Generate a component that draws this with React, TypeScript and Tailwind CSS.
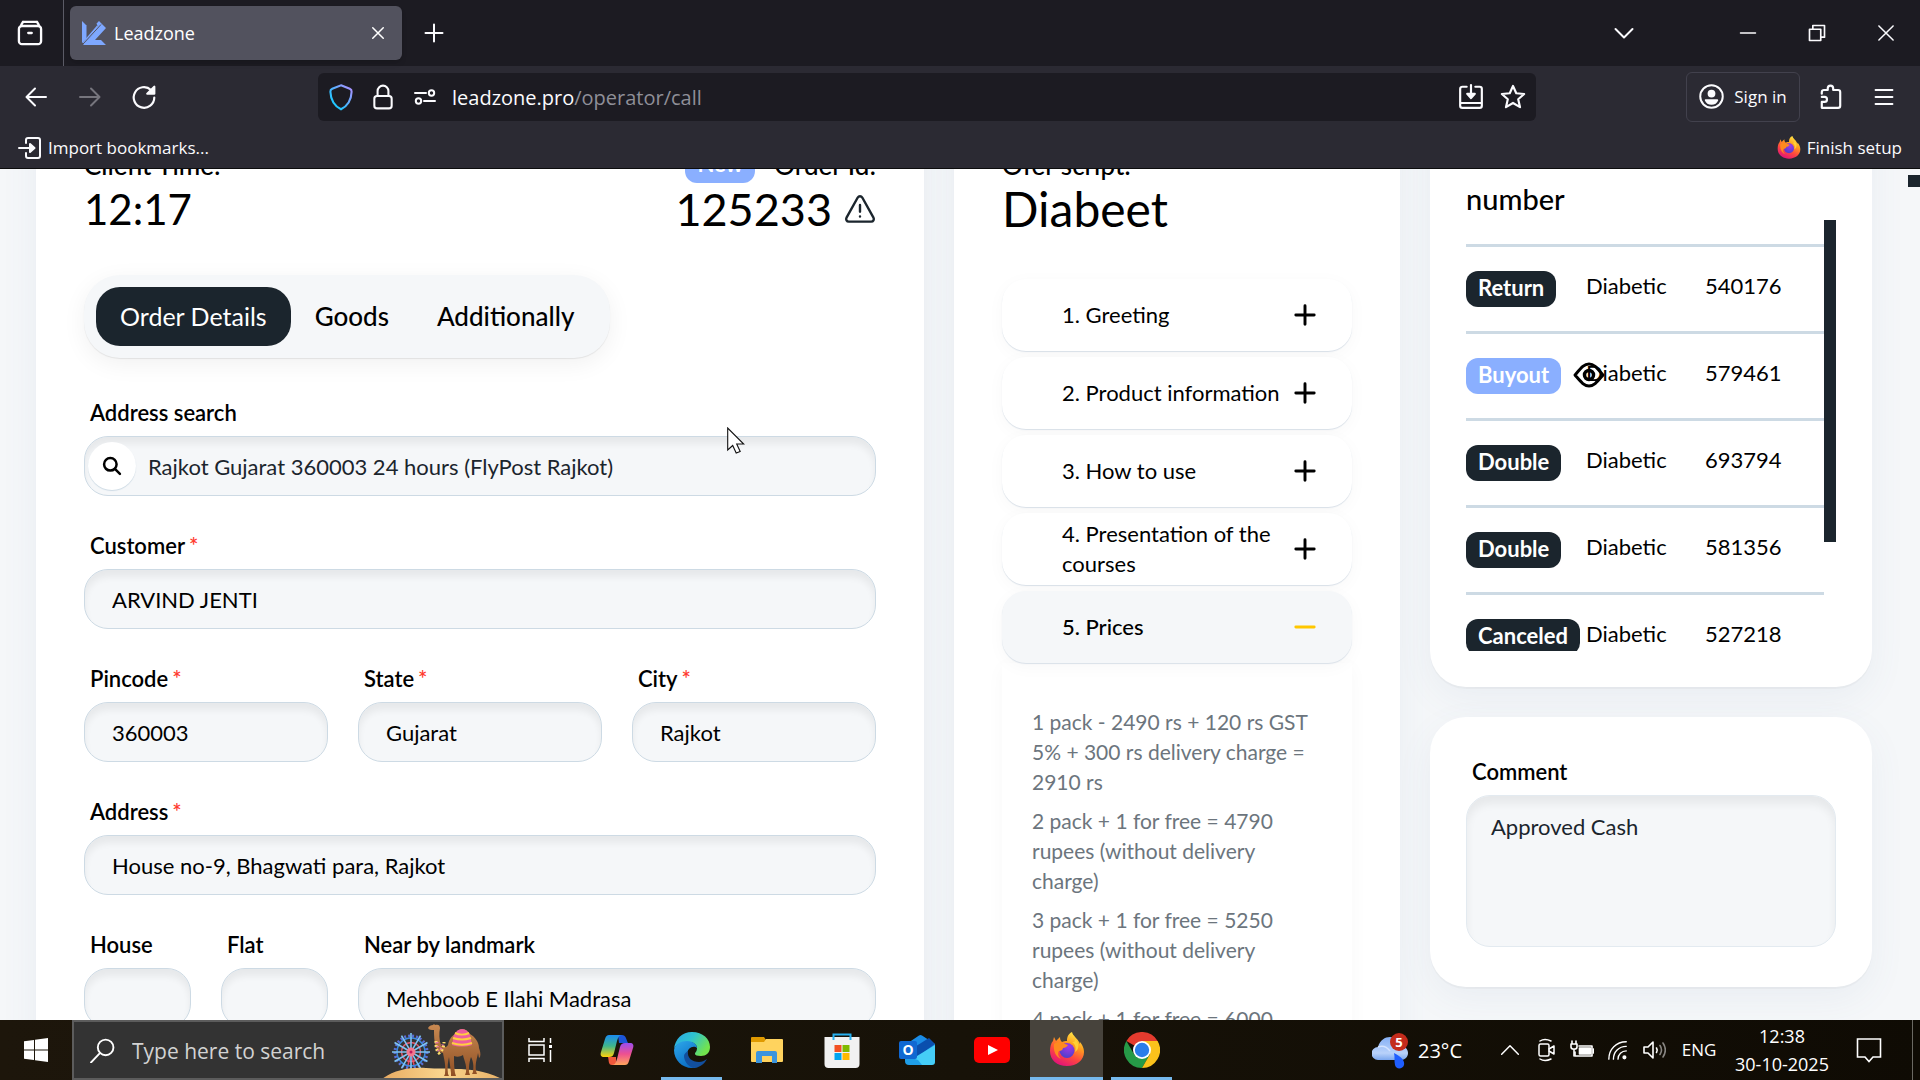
import type { ReactNode } from "react";

const headings = "text-[26px] leading-8 font-medium";
const bigText = "text-[45px] leading-[56px]";
const labelClass = "mb-2 ml-1.5 flex text-[22px] leading-[30px] font-semibold whitespace-nowrap";
const inputClass =
  "h-[60px] w-full rounded-3xl border border-[#cddae4] bg-[#f5f7f9] px-[27px] text-[22px] text-black shadow-[inset_0_7px_7px_rgba(0,0,0,0.06)] outline-none";
const cardShadow = "shadow-[0_2px_1px_rgba(0,0,0,0.03),0_12px_36px_rgba(90,120,150,0.07)]";

type FieldProps = { id: string; label: string; value: string; required?: boolean; className?: string };

function Field({ id, label, value, required, className }: FieldProps) {
  return (
    <div className={className}>
      <label htmlFor={id} className={labelClass}>
        {label}
        {required && <span className="ml-1 text-[#ff3b30]">*</span>}
      </label>
      <input id={id} type="text" defaultValue={value} className={inputClass} />
    </div>
  );
}

/* ---------- browser chrome ---------- */

type IconProps = { children: ReactNode; size?: number; stroke?: number; className?: string };

function Icon({ children, size = 24, stroke = 2, className }: IconProps) {
  return (
    <svg
      width={size}
      height={size}
      viewBox="0 0 24 24"
      fill="none"
      stroke="currentColor"
      strokeWidth={stroke}
      strokeLinecap="round"
      strokeLinejoin="round"
      className={className}
      aria-hidden="true"
    >
      {children}
    </svg>
  );
}

function FirefoxLogo({ size }: { size: number }) {
  return (
    <svg width={size} height={size} viewBox="0 0 36 36" aria-hidden="true">
      <defs>
        <linearGradient id="ffBody" x1="0.8" y1="0" x2="0.3" y2="1">
          <stop offset="0" stopColor="#fff44f" />
          <stop offset="0.35" stopColor="#ffa01e" />
          <stop offset="0.65" stopColor="#ff4a3d" />
          <stop offset="1" stopColor="#e1107c" />
        </linearGradient>
        <radialGradient id="ffGlobe" cx="0.6" cy="0.25" r="0.8">
          <stop offset="0" stopColor="#a238e8" />
          <stop offset="1" stopColor="#4a3fc8" />
        </radialGradient>
      </defs>
      <path
        d="M23 0c1 4 5 6 7 10l1 2c0-1 0-2-1-3 4 4 5 8 5 11 0 8-7 14-17 14S1 28 1 19c0-4 1-8 3-10l1-4 2 4 4-4c0 3 1 4 2 5 2-1 3-1 5-1 0-4 1-7 5-9z"
        fill="url(#ffBody)"
      />
      <circle cx="18" cy="18.500" r="7.500" fill="url(#ffGlobe)" />
      <path d="M5 12c4-3 8-2 11 0l3 1c-1 2-3 3-5 3 0 2-2 3-4 3-2 3 0 6 2 8-5-2-8-8-7-15z" fill="#ff8a1f" />
      <path d="M20 9c5 1 8 5 6 11 5-3 4-9 0-13 1 3-1 4-6 2z" fill="#ffd437" opacity="0.900" />
    </svg>
  );
}

function LeadzoneLogo() {
  return (
    <svg width="24" height="24" viewBox="0 0 24 24" fill="#7ea8ff" aria-hidden="true">
      <path d="M0 0l4.500 4.500v13L0 22z" />
      <path d="M14.500 2.500L17 0l7 7-11 12h6l5 5H1L16.500 7.500z" />
      <path d="M.5 21.500L15 4.500l2.500 2.500L2 23.500z" />
      <path d="M1 23L19 3.500" stroke="#52525e" strokeWidth="1" />
    </svg>
  );
}

function TabStrip() {
  return (
    <div className="flex h-[66px] items-center bg-[#1c1b22]">
      <button aria-label="Recent browsing" className="flex h-full w-16 items-center justify-center border-r border-[#5b5b66] pr-1">
        <Icon size={28} stroke={2}>
          <path d="M6 2.500h12M4.500 5L6 2.500M19.500 5L18 2.500" />
          <path d="M2.500 8.500a2.500 2.500 0 0 1 2.500-2.500h14a2.500 2.500 0 0 1 2.500 2.500V19a2.500 2.500 0 0 1-2.500 2.500H5A2.500 2.500 0 0 1 2.500 19zM10.500 12h3" />
        </Icon>
      </button>
      <div className="ml-1.5 flex h-[54px] w-[332px] items-center rounded-md bg-[#52525e] px-3 text-white shadow-md">
        <LeadzoneLogo />
        <span className="ml-2 flex-1 text-[18px]">Leadzone</span>
        <button aria-label="Close tab" className="flex h-8 w-6 items-center justify-center">
          <Icon size={18} stroke={2}>
            <path d="M5 5l14 14M19 5L5 19" />
          </Icon>
        </button>
      </div>
      <button aria-label="New tab" className="ml-4 flex h-8 w-8 items-center justify-center">
        <Icon size={24} stroke={2}>
          <path d="M12 3.500v17M3.500 12h17" />
        </Icon>
      </button>
      <div className="ml-auto flex items-center">
        <button aria-label="List all tabs" className="mr-[55px] flex w-[69px] justify-center">
          <Icon size={24} stroke={2}>
            <path d="M3.500 8l8.500 8.500L20.500 8" />
          </Icon>
        </button>
        <button aria-label="Minimize" className="flex w-[69px] justify-center">
          <Icon size={20} stroke={1.800}>
            <path d="M3 12h18" />
          </Icon>
        </button>
        <button aria-label="Restore" className="flex w-[69px] justify-center">
          <Icon size={20} stroke={2}>
            <path d="M3 7.500h13.500V21H3zM7 7V3h14v14h-4" />
          </Icon>
        </button>
        <button aria-label="Close window" className="flex w-[69px] justify-center">
          <Icon size={20} stroke={1.800}>
            <path d="M3.500 3.500l17 17M20.500 3.500l-17 17" />
          </Icon>
        </button>
      </div>
    </div>
  );
}

function NavBar() {
  return (
    <div className="flex h-[61px] items-center">
      <div className="flex w-[318px] items-center pl-[9px]">
        <button aria-label="Back" className="flex w-[54px] justify-center">
          <Icon size={24}>
            <path d="M22 12H3M11 3.500L2.500 12l8.500 8.500" />
          </Icon>
        </button>
        <button aria-label="Forward" className="flex w-[54px] justify-center text-[#76757d]">
          <Icon size={24}>
            <path d="M2 12h19M13 3.500l8.500 8.500-8.500 8.500" />
          </Icon>
        </button>
        <button aria-label="Reload" className="flex w-[54px] justify-center">
          <Icon size={26}>
            <path d="M21.500 12.500A9.500 9.500 0 1 1 18.500 5.500" />
            <path d="M21.500 2.500v6.500H15z" fill="currentColor" />
          </Icon>
        </button>
      </div>
      <div className="flex h-12 flex-1 items-center rounded-md bg-[#1c1b22] pr-2.5 pl-[9px]">
        <svg width="28" height="28" viewBox="0 0 24 24" fill="none" aria-hidden="true">
          <defs>
            <linearGradient id="shield" x1="1" y1="0" x2="0" y2="1">
              <stop offset="0" stopColor="#b78cff" />
              <stop offset="0.6" stopColor="#3fb9ff" />
              <stop offset="1" stopColor="#00d5ff" />
            </linearGradient>
          </defs>
          <path
            d="M12 2l7.500 3c1.200.5 1.700 1 1.600 2.500C20.800 14.500 18 19.500 12 22.500 6 19.500 3.200 14.500 2.900 7.500 2.800 6 3.300 5.500 4.500 5z"
            stroke="url(#shield)"
            strokeWidth="1.800"
          />
        </svg>
        <Icon size={26} stroke={1.900} className="ml-[15px]">
          <rect x="4" y="11" width="16" height="11.500" rx="2.500" />
          <path d="M7 11V6.500a5 5 0 0 1 10 0V11" />
        </Icon>
        <Icon size={24} stroke={2} className="ml-[17px]">
          <path d="M2 8h11M11 16h11" />
          <circle cx="18.500" cy="8" r="2.700" />
          <circle cx="5.500" cy="16" r="2.700" />
        </Icon>
        <div role="textbox" aria-label="Address" className="ml-[15px] flex-1 pt-0.5 text-[20px] text-[#fbfbfe]">
          leadzone.pro<span className="text-[#8f8f98]">/operator/call</span>
        </div>
        <button aria-label="Install site">
          <Icon size={26} stroke={2}>
            <path d="M8 2.500H4a2 2 0 0 0-2 2V20a2 2 0 0 0 2 2h16a2 2 0 0 0 2-2V4.500a2 2 0 0 0-2-2h-4M2 17.500h20M12 1v9" />
            <path d="M8.500 9h7L12 13z" fill="currentColor" />
          </Icon>
        </button>
        <button aria-label="Bookmark this page" className="ml-4">
          <Icon size={26} stroke={2}>
            <path d="M12 1.800l3 6.700 7.300.7-5.500 4.900 1.700 7.300L12 17.500l-6.500 3.900 1.700-7.300-5.500-4.900 7.300-.7z" />
          </Icon>
        </button>
      </div>
      <div className="flex w-[384px] items-center justify-end pr-[24px]">
        <button className="flex h-[50px] w-[114px] items-center justify-center gap-2.5 rounded-md border border-[#42414d] text-[17px] whitespace-nowrap">
          <Icon size={25} stroke={1.900}>
            <circle cx="12" cy="12" r="10.800" />
            <circle cx="12" cy="9.200" r="2.800" fill="currentColor" />
            <path d="M6.500 15.500h11c-1 2.500-3 3.500-5.500 3.500s-4.500-1-5.500-3.500z" fill="currentColor" />
          </Icon>
          Sign in
        </button>
        <button aria-label="Extensions" className="ml-[18px]">
          <Icon size={26} stroke={2}>
            <path d="M3.500 9V7.500a2 2 0 0 1 2-2H9V4a2.500 2.500 0 0 1 5 0v1.500h4.500a2 2 0 0 1 2 2V20a2 2 0 0 1-2 2h-15v-5.500H6a2.300 2.300 0 0 0 0-4.600H3.500" />
          </Icon>
        </button>
        <button aria-label="Open application menu" className="ml-[28px]">
          <Icon size={24} stroke={1.800}>
            <path d="M3.500 5h17M3.500 12h17M3.500 19h17" />
          </Icon>
        </button>
      </div>
    </div>
  );
}

function BookmarksBar() {
  return (
    <div className="flex h-[42px] items-center justify-between border-b border-[#0c0c0d] px-[18px] text-[17px]">
      <button className="flex items-center gap-1.5">
        <Icon size={24} stroke={2}>
          <path d="M8 7V4a2 2 0 0 1 2-2h10a2 2 0 0 1 2 2v16a2 2 0 0 1-2 2H10a2 2 0 0 1-2-2v-3M1 12h12" />
          <path d="M12 8l4.500 4-4.500 4z" fill="currentColor" />
        </Icon>
        Import bookmarks...
      </button>
      <button className="flex items-center gap-1.5">
        <FirefoxLogo size={24} />
        Finish setup
      </button>
    </div>
  );
}

/* ---------- page ---------- */

function OrderCard() {
  return (
    <section className={`bg-white px-12 pt-9 ${cardShadow}`}>
      <div className="flex justify-between">
        <div>
          <h2 className={headings}>Client Time:</h2>
          <p className="text-[42px] leading-[56px]">12:17</p>
        </div>
        <div>
          <div className="flex h-8 items-center justify-end gap-[19px]">
            <span className="h-9 rounded-xl bg-[#8aafff] px-3 text-[22px] leading-[34px] font-bold text-white">New</span>
            <h2 className={headings}>Order Id:</h2>
          </div>
          <p className={`flex items-center justify-end gap-3 ${bigText}`}>
            125233
            <Icon size={32} stroke={1.800} className="text-[#1b252d]">
              <path d="M10.300 3.400L1.900 18.500a2 2 0 0 0 1.700 3h16.800a2 2 0 0 0 1.700-3L13.700 3.400a2 2 0 0 0-3.400 0zM12 9v5M12 17.500v.1" />
            </Icon>
          </p>
        </div>
      </div>

      <nav className="mt-[38px] flex w-fit rounded-[36px] bg-[#f5f7f9] p-3 text-[26px] font-medium shadow-[0_1px_1px_rgba(0,0,0,0.08),0_6px_24px_rgba(0,0,0,0.06)]">
        <button className="h-[59px] rounded-3xl bg-[#1b252d] px-6 text-[25px] font-normal text-white">Order Details</button>
        <button className="h-[59px] px-6">Goods</button>
        <button className="h-[59px] px-6">Additionally</button>
      </nav>

      <form className="mt-10 grid grid-cols-6 gap-x-[30px] gap-y-[35px]">
        <div className="col-span-6">
          <label htmlFor="search" className={labelClass}>
            Address search
          </label>
          <div className="flex h-[60px] items-center rounded-3xl border border-[#cddae4] bg-[#f5f7f9] pl-[3px] shadow-[inset_0_7px_7px_rgba(0,0,0,0.06)]">
            <button
              type="button"
              aria-label="Search address"
              className="flex h-12 w-12 items-center justify-center rounded-3xl bg-white shadow-[0_1px_1px_#cddae4]"
            >
              <Icon size={20} stroke={3}>
                <circle cx="10" cy="10" r="7.500" />
                <path d="M15.500 15.500l6 6" />
              </Icon>
            </button>
            <input
              id="search"
              type="text"
              defaultValue="Rajkot Gujarat 360003 24 hours (FlyPost Rajkot)"
              className="flex-1 bg-transparent pl-3 text-[22px] text-[#1b252d] outline-none"
            />
          </div>
        </div>
        <Field id="customer" label="Customer" value="ARVIND JENTI" required className="col-span-6" />
        <Field id="pincode" label="Pincode" value="360003" required className="col-span-2" />
        <Field id="state" label="State" value="Gujarat" required className="col-span-2" />
        <Field id="city" label="City" value="Rajkot" required className="col-span-2" />
        <Field id="address" label="Address" value="House no-9, Bhagwati para, Rajkot" required className="col-span-6" />
        <Field id="house" label="House" value="" />
        <Field id="flat" label="Flat" value="" />
        <Field id="landmark" label="Near by landmark" value="Mehboob E Ilahi Madrasa" className="col-span-4" />
      </form>
    </section>
  );
}

const scriptSteps = ["1. Greeting", "2. Product information", "3. How to use", "4. Presentation of the courses"];

const prices = [
  "1 pack - 2490 rs + 120 rs GST 5% + 300 rs delivery charge = 2910 rs",
  "2 pack + 1 for free = 4790 rupees (without delivery charge)",
  "3 pack + 1 for free = 5250 rupees (without delivery charge)",
  "4 pack + 1 for free = 6000 rupees (without delivery charge)",
];

const stepClass =
  "flex h-[72px] w-full items-center justify-between rounded-3xl pr-9 pl-[60px] text-left text-[22px] leading-[30px] shadow-[0_1px_1px_#d9e0e8,0_4px_18px_rgba(0,0,0,0.03)]";

function ScriptCard() {
  return (
    <section className={`bg-white px-12 pt-9 ${cardShadow}`}>
      <h2 className={headings}>Ofer script:</h2>
      <p className="text-[48px] leading-[56px]">Diabeet</p>
      <div className="mt-[42px] flex flex-col gap-1.5">
        {scriptSteps.map((step) => (
          <button key={step} className={`${stepClass} bg-white`}>
            {step}
            <Icon size={22} stroke={3.200} className="shrink-0">
              <path d="M12 2v20M2 12h20" />
            </Icon>
          </button>
        ))}
        <button className={`${stepClass} bg-[#f5f7f9] font-medium`}>
          5. Prices
          <Icon size={22} stroke={3.200} className="shrink-0 text-[#ffc700]">
            <path d="M2 12h20" />
          </Icon>
        </button>
      </div>
      <div className="flex flex-col gap-[9px] px-[30px] pt-11 pb-8 text-[21px] leading-[30px] text-[#6c757d] shadow-[0_4px_18px_rgba(0,0,0,0.03)]">
        {prices.map((price) => (
          <p key={price}>{price}</p>
        ))}
      </div>
    </section>
  );
}

const orders = [
  { status: "Return", product: "Diabetic", number: "540176" },
  { status: "Buyout", product: "Diabetic", number: "579461" },
  { status: "Double", product: "Diabetic", number: "693794" },
  { status: "Double", product: "Diabetic", number: "581356" },
  { status: "Canceled", product: "Diabetic", number: "527218" },
];

function OrdersCard() {
  return (
    <section className={`rounded-b-[36px] bg-white px-9 pt-16 pb-9 ${cardShadow}`}>
      <h2 className="text-[29px] leading-[43px] font-medium">number</h2>
      <div className="flex h-[431px] items-start overflow-hidden">
        <div className="flex-1 pt-6">
          <table className="w-full table-fixed text-left text-[22px] leading-[30px]">
            <tbody>
              {orders.map((order) => (
                <tr key={order.number} className="h-[87px] border-t-[3px] border-[#cddae4] align-top">
                  <td className="w-[120px] pt-6">
                    <div className="relative w-fit">
                      <span
                        className={`block h-9 rounded-xl px-3 leading-[34px] font-bold text-white ${
                          order.status === "Buyout" ? "bg-[#8aafff]" : "bg-[#1b252d]"
                        }`}
                      >
                        {order.status}
                      </span>
                      {order.status === "Buyout" && (
                        <svg width="32" height="26" viewBox="0 0 32 26" className="absolute top-1 left-full ml-3" fill="none" stroke="#000" aria-hidden="true">
                          <path d="M2 13C8 6 11 2 16 2s8 4 14 11c-6 7-9 11-14 11S8 20 2 13z" strokeWidth="3" strokeLinejoin="round" />
                          <circle cx="16" cy="13" r="4.500" strokeWidth="3.500" />
                        </svg>
                      )}
                    </div>
                  </td>
                  <td className="w-[119px] pt-6">{order.product}</td>
                  <td className="pt-6">{order.number}</td>
                </tr>
              ))}
            </tbody>
          </table>
        </div>
        <div className="h-[322px] w-3 bg-[#1b252d]" />
      </div>
    </section>
  );
}

function CommentCard() {
  return (
    <section className={`rounded-[36px] bg-white px-9 py-10 ${cardShadow}`}>
      <label htmlFor="comment" className={labelClass}>
        Comment
      </label>
      <textarea
        id="comment"
        defaultValue="Approved Cash"
        className="block h-[152px] w-full resize-none rounded-3xl border border-[#e3eaf0] bg-[#f5f7f9] px-6 py-4 text-[22px] leading-[30px] text-[#1b252d] shadow-[inset_0_8px_8px_rgba(0,0,0,0.06)] outline-none"
      />
    </section>
  );
}

/* ---------- taskbar ---------- */

const spokes = [0, 30, 60, 90, 120, 150];

function SearchArt() {
  return (
    <svg width="120" height="58" viewBox="0 0 120 58" className="shrink-0" aria-hidden="true">
      <defs>
        <linearGradient id="camel" x1="0" y1="0" x2="0" y2="1">
          <stop offset="0" stopColor="#c98a52" />
          <stop offset="1" stopColor="#8f4f24" />
        </linearGradient>
        <linearGradient id="sand" x1="0" y1="0" x2="1" y2="0">
          <stop offset="0" stopColor="#e8ab62" />
          <stop offset="0.500" stopColor="#fad58d" />
          <stop offset="1" stopColor="#e9b268" />
        </linearGradient>
      </defs>
      <path d="M24 52l5-20 5 20" stroke="#e0455e" strokeWidth="1.500" fill="none" />
      <circle cx="29" cy="31" r="16" fill="none" stroke="#5a6fd6" strokeWidth="3" strokeDasharray="2 2" />
      <circle cx="29" cy="31" r="14" fill="none" stroke="#3d8be0" strokeWidth="1.500" />
      <circle cx="29" cy="31" r="9.500" fill="none" stroke="#e55a72" strokeWidth="1.500" />
      {spokes.map((angle) => (
        <path key={angle} d="M29 12v38" stroke="#7fc4f5" strokeWidth="1.600" transform={`rotate(${angle} 29 31)`} />
      ))}
      <circle cx="29" cy="31" r="4.500" fill="#f2788f" />
      <circle cx="29" cy="31" r="1.500" fill="#c2185b" />
      <path d="M0 58c12-9 28-12 44-11 12 1 18 0 30 1 14 0 30 2 46 10z" fill="url(#sand)" />
      <path
        d="M46 7c1-2 3-3 5-3l1-1 1 1c3-1 5 0 5 3-1 5-1 12 1 17 2 3 5 3 7 0 1-6 4-9 7-11 4-6 10-7 15 0 5 3 9 8 9 14 1 3 2 6 1 9l-1 1-1-5c-1 6-3 10-2 18l1 3h-5l1-2c1-7 0-11-2-15-2 6-2 9-2 15l1 3h-5l1-3c1-7-2-12-3-17-3 2-6 2-9 1 0 6 0 11 1 17l1 3h-5v-3l-2-16c-1 5-2 10-1 17l1 2h-5l1-2c1-10-1-15-2-21-8-1-9-11-9-23-3 0-5 0-6-2z"
        fill="url(#camel)"
      />
      <path d="M72 14c4-8 12-8 16 0l2 10c-6 2-14 2-20 0z" fill="#ee5f9e" />
      <path d="M73 12c4 2 10 2 14 0M71 17c6 2 12 2 18 0M70 22c6 2 14 2 20 0" stroke="#ffcf3f" strokeWidth="2" fill="none" />
      <path d="M54 20c0 6 0 9 3 12 3-2 5-6 5-11" stroke="#ffdf6b" strokeWidth="3" strokeDasharray="2 2" fill="none" />
      <path d="M55 21c0 5 1 8 2 9 2-2 4-5 4-8" stroke="#e86fb4" strokeWidth="3" strokeDasharray="1 3" fill="none" />
    </svg>
  );
}

function CopilotLogo() {
  return (
    <svg width="34" height="32" viewBox="0 0 34 32" aria-hidden="true">
      <defs>
        <linearGradient id="copA" x1="0" y1="0" x2="0" y2="1">
          <stop offset="0" stopColor="#1b8cf0" />
          <stop offset="0.500" stopColor="#3fb58c" />
          <stop offset="1" stopColor="#ffd20a" />
        </linearGradient>
        <linearGradient id="copB" x1="0" y1="0" x2="0" y2="1">
          <stop offset="0" stopColor="#9a4df0" />
          <stop offset="0.500" stopColor="#ee5090" />
          <stop offset="1" stopColor="#ffa65c" />
        </linearGradient>
      </defs>
      <path d="M18 1h4c4 0 4 4 6 8h-9z" fill="#1c55d8" />
      <path d="M16 31h-4c-4 0-3-5-4-8h8z" fill="#f0583c" />
      <path d="M9 1h13c-3 0-4 3-5 6l-3 12c-1 3-2 4-5 4H4c-3 0-4-2-3-5L5 5c1-3 2-4 4-4z" fill="url(#copA)" />
      <path d="M25 31H12c3 0 4-3 5-6l3-12c1-3 2-4 5-4h5c3 0 4 2 3 5l-4 13c-1 3-2 4-4 4z" fill="url(#copB)" />
    </svg>
  );
}

function EdgeLogo() {
  return (
    <svg width="36" height="36" viewBox="0 0 36 36" aria-hidden="true">
      <defs>
        <linearGradient id="edgeTop" x1="0" y1="0" x2="1" y2="0.500">
          <stop offset="0" stopColor="#2aa6e8" />
          <stop offset="0.500" stopColor="#2fc3cf" />
          <stop offset="1" stopColor="#72e34e" />
        </linearGradient>
        <linearGradient id="edgeLeft" x1="0" y1="0" x2="0.600" y2="1">
          <stop offset="0" stopColor="#2ea8ea" />
          <stop offset="1" stopColor="#0a6cc4" />
        </linearGradient>
      </defs>
      <path d="M0 17C1 7 8 0 18 0c11 0 18 7 18 15 0 6-4 9-9 9-4 0-6-1-6-2 0-2 2-2 2-6 0-3-3-6-8-6C8 10 2 12 0 17z" fill="url(#edgeTop)" />
      <path d="M0 18C1 12 7 9 13 9c7 0 10 4 10 7-3-3-10-1-10 7 0 6 4 12 11 13H18C8 36 0 28 0 18z" fill="url(#edgeLeft)" />
      <path d="M14 19c-1 7 4 11 11 11 3 0 5-1 8-3-3 6-9 9-14 9-6-2-9-8-9-12 0-2 2-4 4-5z" fill="#124f9e" />
    </svg>
  );
}

function FolderLogo() {
  return (
    <svg width="32" height="28" viewBox="0 0 32 28" aria-hidden="true">
      <path d="M0 2a1 1 0 0 1 1-1h12l2 3v4H0z" fill="#e09a00" />
      <path d="M0 6h13l2-3h16a1 1 0 0 1 1 1v21a1 1 0 0 1-1 1H1a1 1 0 0 1-1-1z" fill="#ffd35e" />
      <path d="M5 27V17a2 2 0 0 1 2-2h17a2 2 0 0 1 2 2v10h-5v-7H11v7z" fill="#3b94dd" />
    </svg>
  );
}

function StoreLogo() {
  return (
    <svg width="36" height="36" viewBox="0 0 36 36" aria-hidden="true">
      <path d="M.5 5h35v27a4 4 0 0 1-4 4h-27a4 4 0 0 1-4-4z" fill="#f1f1f1" />
      <path d="M9.500 8V2.500h17V8" fill="none" stroke="#26b0f0" strokeWidth="2" />
      <path d="M10.500 13h7v7h-7z" fill="#f25022" />
      <path d="M18.500 13h7v7h-7z" fill="#7fba00" />
      <path d="M10.500 21h7v7h-7z" fill="#00a4ef" />
      <path d="M18.500 21h7v7h-7z" fill="#ffb900" />
    </svg>
  );
}

function OutlookLogo() {
  return (
    <svg width="36" height="32" viewBox="0 0 36 32" aria-hidden="true">
      <path d="M6 11L20 1.500c1-.8 2-.8 3 0L36 10v14H6z" fill="#1a8ce6" />
      <path d="M14 14L30 4l6 6-18 13z" fill="#0a4fae" />
      <path d="M18 22l18-11v17a3 3 0 0 1-3 3H11z" fill="#45cdf7" />
      <path d="M6 22l13 4 4 5H10a4 4 0 0 1-4-4z" fill="#1f9ee8" />
      <rect x="0" y="7" width="18" height="18" rx="2" fill="#1068d2" />
      <text x="9" y="21" textAnchor="middle" fontSize="14" fontWeight="700" fill="#fff">
        O
      </text>
    </svg>
  );
}

function YoutubeLogo() {
  return (
    <svg width="36" height="26" viewBox="0 0 36 26" aria-hidden="true">
      <rect width="36" height="26" rx="5" fill="#f00" />
      <path d="M14 8l10 5-10 5z" fill="#fff" />
    </svg>
  );
}

function ChromeLogo() {
  return (
    <svg width="36" height="36" viewBox="0 0 36 36" aria-hidden="true">
      <path d="M18 18L2.400 9A18 18 0 0 1 33.600 9z" fill="#e33b2e" />
      <path d="M2.400 9A18 18 0 0 0 18 36l7.800-13.500L10.200 22.500z" fill="#269a47" />
      <path d="M18 9h15.600A18 18 0 0 1 18 36l7.800-13.500z" fill="#fcc21b" />
      <circle cx="18" cy="18" r="9" fill="#fff" />
      <circle cx="18" cy="18" r="7.200" fill="#2b7de9" />
    </svg>
  );
}

const apps = [
  { name: "Copilot", icon: <CopilotLogo />, running: false, active: false },
  { name: "Microsoft Edge", icon: <EdgeLogo />, running: true, active: false },
  { name: "File Explorer", icon: <FolderLogo />, running: false, active: false },
  { name: "Microsoft Store", icon: <StoreLogo />, running: false, active: false },
  { name: "Outlook", icon: <OutlookLogo />, running: false, active: false },
  { name: "YouTube", icon: <YoutubeLogo />, running: false, active: false },
  { name: "Firefox", icon: <FirefoxLogo size={36} />, running: true, active: true },
  { name: "Google Chrome", icon: <ChromeLogo />, running: true, active: false },
];

function Taskbar() {
  return (
    <footer className="flex h-[60px] shrink-0 items-stretch bg-[#171208] bg-linear-to-r from-[#1d160b] via-[#171208] to-[#0f0b04] font-['Open_Sans','Noto_Sans',sans-serif] text-white">
      <button aria-label="Start" className="flex w-[72px] items-center justify-center">
        <svg width="24" height="24" viewBox="0 0 24 24" fill="#fff" aria-hidden="true">
          <path d="M0 3.300l10-1.400v9.600H0zM11 1.700L24 0v11.500H11zM0 12.500h10v9.600L0 20.700zM11 12.500h13V24l-13-1.700z" />
        </svg>
      </button>
      <label className="flex w-[432px] items-center overflow-hidden border-2 border-[#5c5c5c] bg-[#333] pl-4">
        <Icon size={25} stroke={1.800} className="shrink-0 -scale-x-100">
          <circle cx="9" cy="9" r="7.500" />
          <path d="M14.500 14.500l8.500 9" />
        </Icon>
        <input
          type="text"
          aria-label="Type here to search"
          placeholder="Type here to search"
          className="ml-[17px] min-w-0 flex-1 bg-transparent pt-1 text-[21px] outline-none placeholder:text-[#d2d2d2]"
        />
        <SearchArt />
      </label>
      <button aria-label="Task View" className="flex w-[72px] items-center justify-center">
        <svg width="24" height="24" viewBox="0 0 24 24" fill="none" stroke="#fff" strokeWidth="1.500" aria-hidden="true">
          <path d="M1 0v3.500h15V0M1 7h15v10H1zM1 24v-3.500h15V24M22.500 0v5M22.500 12v12" />
          <path d="M21 7h3v3h-3z" fill="#fff" stroke="none" />
        </svg>
      </button>
      <div className="ml-1 flex gap-0.5">
        {apps.map((app) => (
          <button
            key={app.name}
            aria-label={app.name}
            className={`flex w-[73px] flex-col items-center ${app.active ? "bg-[#47433c]" : ""}`}
          >
            <span className="flex flex-1 items-center pt-[3px]">{app.icon}</span>
            <span className={`h-[3px] ${app.active ? "w-full" : "w-[61px]"} ${app.running ? "bg-[#76b9ed]" : ""}`} />
          </button>
        ))}
      </div>

      <div className="ml-auto flex items-center">
        <button className="mr-[30px] flex items-center gap-2.5 pt-0.5 text-[20px]">
          <span className="relative">
            <svg width="36" height="36" viewBox="0 0 36 36" aria-hidden="true">
              <defs>
                <linearGradient id="cloud" x1="0" y1="0" x2="0" y2="1">
                  <stop offset="0" stopColor="#86b0f5" />
                  <stop offset="0.700" stopColor="#b9d2fa" />
                  <stop offset="1" stopColor="#7ba7ee" />
                </linearGradient>
              </defs>
              <path d="M6 27a6.500 6.500 0 0 1 0-13C8 7 13 4 18 4c6 0 9 4 10 9 5 0 8 3 8 7s-3 7-7 7z" fill="url(#cloud)" />
              <path d="M6 14c5-2 9 0 12 4" stroke="#d4e3ff" strokeWidth="1.500" fill="none" />
              <path d="M22 20c7 4 11 7 10 12-1 4-8 5-9 0-1-4 0-8-1-12z" fill="#1f5eff" />
            </svg>
            <span className="absolute top-0 right-0 h-[18px] w-[18px] rounded-full bg-[#c42b1c] text-center text-[13px] leading-[18px] font-bold">5</span>
          </span>
          23°C
        </button>
        <button aria-label="Show hidden icons" className="flex w-9 justify-center">
          <Icon size={20} stroke={1.800}>
            <path d="M2 17L12 7l10 10" />
          </Icon>
        </button>
        <button aria-label="Meet Now" className="flex w-9 justify-center">
          <Icon size={24} stroke={1.500}>
            <rect x="5" y="6" width="10" height="12" rx="1.500" />
            <path d="M15 11l5-3v8l-5-3M6 3c3-2 7-2 11 0M6 21c3 2 7 2 11 0" />
          </Icon>
        </button>
        <button aria-label="Battery" className="flex w-9 justify-center">
          <Icon size={24} stroke={1.600}>
            <path d="M9 8h13v10H5v-4" />
            <path d="M9.500 10h11v6h-11z" fill="currentColor" />
            <path d="M23.500 11v4M2 3v3M6 3v3M1 6h6v3c0 3-6 3-6 0zM4 11v7" />
          </Icon>
        </button>
        <button aria-label="Network" className="flex w-9 justify-center">
          <Icon size={22} stroke={1.500}>
            <path d="M2 22C2 11 10 3 21 3" />
            <path d="M7 22c0-8 6-14 14-14M12 22c0-5 4-9 9-9" />
            <circle cx="19" cy="20" r="1.500" fill="currentColor" />
          </Icon>
        </button>
        <button aria-label="Volume" className="flex w-9 justify-center">
          <Icon size={24} stroke={1.600}>
            <path d="M2 9h4l5-5v16l-5-5H2z" />
            <path d="M14.500 10c1 1.500 1 3 0 4.500" />
            <path d="M18 7.500c2 3 2 6 0 9M21 5c3 4.500 3 9.500 0 14" opacity="0.500" />
          </Icon>
        </button>
        <button className="w-[58px] pr-1 text-center text-[17px]">ENG</button>
        <button className="w-[104px] text-center text-[18px] leading-7">
          <span className="block">12:38</span>
          <span className="block whitespace-nowrap">30-10-2025</span>
        </button>
        <button aria-label="Notifications" className="mr-2 flex w-[70px] justify-center">
          <svg width="26" height="26" viewBox="0 0 26 26" fill="none" stroke="#fff" strokeWidth="1.600" aria-hidden="true">
            <path d="M1.500 2h23v18H17l-4 4.500L9 20H1.500z" />
          </svg>
        </button>
        <button aria-label="Show desktop" className="h-[60px] w-2 border-l border-[#6b6963]" />
      </div>
    </footer>
  );
}

function Pointer() {
  return (
    <svg width="18" height="28" viewBox="0 0 18 28" className="pointer-events-none absolute top-[427px] left-[727px]" aria-hidden="true">
      <path d="M.7 1v22l5-4.500 3.500 7.500 4-1.500-3.500-7.500h7z" fill="#fff" stroke="#111" strokeWidth="1.100" />
    </svg>
  );
}

export default function App() {
  return (
    <div className="relative flex h-screen flex-col overflow-hidden bg-[#f5f7f9] font-['Lato',sans-serif] text-black">
      <header className="relative z-10 shrink-0 bg-[#2b2a33] font-['Open_Sans','Noto_Sans',sans-serif] text-[#fbfbfe]">
        <TabStrip />
        <NavBar />
        <BookmarksBar />
      </header>
      <div className="flex min-h-0 flex-1">
        <main className="min-w-0 flex-1 overflow-hidden">
          <div className="-mt-14 grid grid-cols-[888fr_446fr_442fr] gap-[30px] px-9">
            <OrderCard />
            <ScriptCard />
            <div className="flex min-w-0 flex-col gap-[30px]">
              <OrdersCard />
              <CommentCard />
            </div>
          </div>
        </main>
        <div className="w-3 pt-1.5">
          <div className="h-3 bg-[#1b252d]" />
        </div>
      </div>
      <Taskbar />
      <Pointer />
    </div>
  );
}
